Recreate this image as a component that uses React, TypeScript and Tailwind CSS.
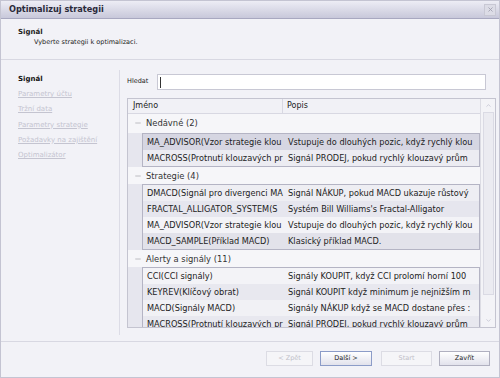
import { Minus, X, ChevronUp, ChevronDown } from 'lucide-react';

const groups = [
  {
    title: "Nedávné (2)",
    rows: [
      ["MA_ADVISOR(Vzor strategie klou", "Vstupuje do dlouhých pozic, když rychlý klou"],
      ["MACROSS(Protnutí klouzavých pr", "Signál PRODEJ, pokud rychlý klouzavý prům"],
    ],
  },
  {
    title: "Strategie (4)",
    rows: [
      ["DMACD(Signál pro divergenci MA", "Signál NÁKUP, pokud MACD ukazuje růstový"],
      ["FRACTAL_ALLIGATOR_SYSTEM(S", "Systém Bill Williams's Fractal-Alligator"],
      ["MA_ADVISOR(Vzor strategie klou", "Vstupuje do dlouhých pozic, když rychlý klou"],
      ["MACD_SAMPLE(Příklad MACD)", "Klasický příklad MACD."],
    ],
  },
  {
    title: "Alerty a signály (11)",
    rows: [
      ["CCI(CCI signály)", "Signály KOUPIT, když CCI prolomí horní 100"],
      ["KEYREV(Klíčový obrat)", "Signál KOUPIT když minimum je nejnižším m"],
      ["MACD(Signály MACD)", "Signály NÁKUP když se MACD dostane přes :"],
      ["MACROSS(Protnutí klouzavých pr", "Signál PRODEJ, pokud rychlý klouzavý prům"],
    ],
  },
];

const rowColors = [
  ["bg-[#d6d6e2]", "bg-[#ececf2]"],
  ["bg-[#eeeef3]", "bg-[#e6e6ee]", "bg-[#f3f3f7]", "bg-[#e2e2ea]"],
  ["bg-[#f3f3f7]", "bg-[#e8e8ef]", "bg-[#f1f1f5]", "bg-[#e8e8ef]"],
];

const steps = ["Signál", "Parametry účtu", "Tržní data", "Parametry strategie", "Požadavky na zajištění", "Optimalizátor"];

const App = () => {
  return (
    <div className="w-[500px] h-[378px] overflow-hidden bg-[#f2f2f7] border border-[#c4c4d2] flex flex-col text-[#222] font-['DejaVu_Sans',sans-serif]">
      {/* title bar */}
      <div className="h-[18px] shrink-0 flex items-center justify-between pl-[8px] pr-[3px] bg-gradient-to-b from-[#ededf5] to-[#c8c8da] border-b border-[#a8a8c0]">
        <span className="text-[8.2px] font-bold text-[#2a2a3a]">Optimalizuj strategii</span>
        <div className="w-[12px] h-[12px] bg-[#dcdce6] border border-[#c8c8d4] flex items-center justify-center">
          <X className="w-[7px] h-[7px] text-[#a0a0b0]" strokeWidth={3} />
        </div>
      </div>

      {/* header */}
      <div className="h-[41px] shrink-0 pl-[17px] pt-[8px] border-b border-[#d8d8e2]">
        <div className="text-[7px] font-bold leading-[10px]">Signál</div>
        <div className="text-[6.5px] leading-[10px] pl-[16px]">Vyberte strategii k optimalizaci.</div>
      </div>

      {/* body */}
      <div className="h-[281px] shrink-0 flex pt-[10px]">
        <div className="w-[119px] shrink-0 border-r border-[#dcdce6] pl-[17px] pt-[2px] mb-[6px]">
          {steps.map((s, i) => (
            <div
              key={s}
              className={
                i === 0
                  ? "text-[7px] font-bold leading-[15.2px] text-[#111]"
                  : "text-[7px] leading-[15.2px] text-[#c4c4d0] underline"
              }
            >
              {s}
            </div>
          ))}
        </div>

        <div className="flex-1 min-w-0 flex flex-col pl-[7px] pr-[3px]">
          <div className="flex items-center h-[16px] gap-[6px] mt-[4px] mb-[8px]">
            <span className="text-[6.5px] w-[24px] shrink-0">Hledat</span>
            <div className="flex-1 mr-[10px] h-[16px] bg-white border border-[#c8c8d4] flex items-center pl-[2px]">
              <div className="w-px h-[11px] bg-[#333]" />
            </div>
          </div>

          <div className="h-[230px] shrink-0 flex border border-[#c4c4d0] bg-[#f6f6f9]">
            <div className="flex-1 min-w-0 overflow-hidden">
              <div className="h-[15px] flex items-center border-b border-[#d8d8e2] bg-[#f1f1f6] text-[8px]">
                <div className="w-[155px] pl-[5px] border-r border-[#d8d8e2] h-full flex items-center">Jméno</div>
                <div className="pl-[4px]">Popis</div>
              </div>
              {groups.map((g, gi) => (
                <div key={g.title} className={gi === 0 ? "mt-[1px] mb-[1px]" : "mb-[1px]"}>
                  <div className="h-[16px] flex items-center pl-[6px] gap-[4px] text-[8.4px] text-[#333]">
                    <Minus className="w-[8px] h-[8px] text-[#a0a0a8]" />
                    <span>{g.title}</span>
                  </div>
                  <div className={gi === 0 ? "flex mt-[2px]" : "flex"}>
                    <div className="w-[14px] shrink-0 bg-[#e6e6ee]" />
                    <div className="flex-1 min-w-0 border border-[#b4b4c4]">
                      {g.rows.map((r, i) => (
                        <div
                          key={i}
                          className={"h-[16px] flex items-center text-[8.2px] whitespace-nowrap overflow-hidden " + rowColors[gi][i]}
                        >
                          <div className="w-[141px] shrink-0 overflow-hidden pl-[4px]">{r[0]}</div>
                          <div className="flex-1 min-w-0 overflow-hidden pl-[4px]">{r[1]}</div>
                        </div>
                      ))}
                    </div>
                  </div>
                </div>
              ))}
            </div>
            <div className="w-[15px] shrink-0 bg-[#f3f3f7] border-l border-[#dcdce4] flex flex-col items-center py-[3px]">
              <ChevronUp className="w-[7px] h-[7px] text-[#b4b4c4] shrink-0" />
              <div className="flex-1 w-[11px] my-[3px] bg-[#ebebf1] border border-[#dadae4] mb-[22px]" />
              <ChevronDown className="w-[7px] h-[7px] text-[#b4b4c4] shrink-0" />
            </div>
          </div>
        </div>
      </div>

      {/* footer */}
      <div className="flex-1 border-t border-[#d8d8e2] flex justify-end items-start pt-[9px] gap-[7px] pr-[9px]">
        <button className="w-[47px] h-[15px] text-[6.5px] text-[#c0c0c8] bg-[#f5f5f8] border border-[#dcdce4]">&lt; Zpět</button>
        <button className="w-[52px] h-[15px] text-[6.5px] bg-gradient-to-b from-[#ffffff] to-[#e2e2ec] border border-[#8c9cc8] mr-[2px]">Další &gt;</button>
        <button className="w-[51px] h-[15px] text-[6.5px] text-[#c0c0c8] bg-[#f5f5f8] border border-[#dcdce4]">Start</button>
        <button className="w-[51px] h-[15px] text-[6.5px] bg-gradient-to-b from-[#ffffff] to-[#e2e2ec] border border-[#b0b0c0]">Zavřít</button>
      </div>
    </div>
  );
};

export default App;
